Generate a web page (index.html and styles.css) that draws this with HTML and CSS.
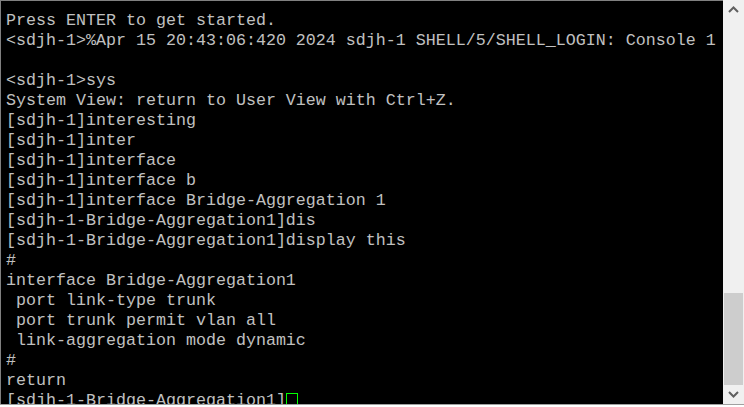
FILE: index.html
```html
<!DOCTYPE html>
<html>
<head>
<meta charset="utf-8">
<link rel="stylesheet" href="styles.css">
</head>
<body>
<div class="window">
  <div class="terminal">
<pre class="output">Press ENTER to get started.
&lt;sdjh-1&gt;%Apr 15 20:43:06:420 2024 sdjh-1 SHELL/5/SHELL_LOGIN: Console 1

&lt;sdjh-1&gt;sys
System View: return to User View with Ctrl+Z.
[sdjh-1]interesting
[sdjh-1]inter
[sdjh-1]interface
[sdjh-1]interface b
[sdjh-1]interface Bridge-Aggregation 1
[sdjh-1-Bridge-Aggregation1]dis
[sdjh-1-Bridge-Aggregation1]display this
#
interface Bridge-Aggregation1
 port link-type trunk
 port trunk permit vlan all
 link-aggregation mode dynamic
#
return
[sdjh-1-Bridge-Aggregation1]<span class="cursor"> </span></pre>
  </div>
  <div class="scrollbar">
    <div class="arrow">
      <svg width="11" height="7" viewBox="0 0 11 7"><path d="M1 6 L5.5 1.5 L10 6" fill="none" stroke="#606060" stroke-width="2"/></svg>
    </div>
    <div class="track">
      <div class="thumb"></div>
    </div>
    <div class="arrow">
      <svg width="11" height="7" viewBox="0 0 11 7"><path d="M1 1 L5.5 5.5 L10 1" fill="none" stroke="#606060" stroke-width="2"/></svg>
    </div>
  </div>
</div>
</body>
</html>
```

FILE: styles.css
```css
html, body {
  margin: 0;
  padding: 0;
  background: #ffffff;
  width: 744px;
  height: 407px;
  overflow: hidden;
}

.window {
  display: flex;
  width: 744px;
  height: 405px;
  border-bottom: 1px solid #a0a0a0;
  box-sizing: border-box;
}

.terminal {
  flex: 1;
  background: #000000;
  border-top: 1px solid #808080;
  border-left: 1px solid #808080;
  overflow: hidden;
  padding: 10px 0 0 5px;
}

.output {
  margin: 0;
  font-family: "Liberation Mono", "Courier New", monospace;
  font-size: 16.67px;
  line-height: 20px;
  color: #c0c0c0;
  white-space: pre;
}

.cursor {
  display: inline-block;
  width: 12px;
  height: 14px;
  border: 1px solid #00ff00;
  vertical-align: -3px;
  box-sizing: border-box;
}

.scrollbar {
  width: 21px;
  background: #f0f0f0;
  display: flex;
  flex-direction: column;
}

.arrow {
  height: 19px;
  display: flex;
  align-items: center;
  justify-content: center;
}

.track {
  flex: 1;
  display: flex;
  flex-direction: column;
  justify-content: flex-end;
  padding: 0 0 0 1px;
}

.thumb {
  height: 92px;
  background: #cdcdcd;
  width: 19px;
}
```
